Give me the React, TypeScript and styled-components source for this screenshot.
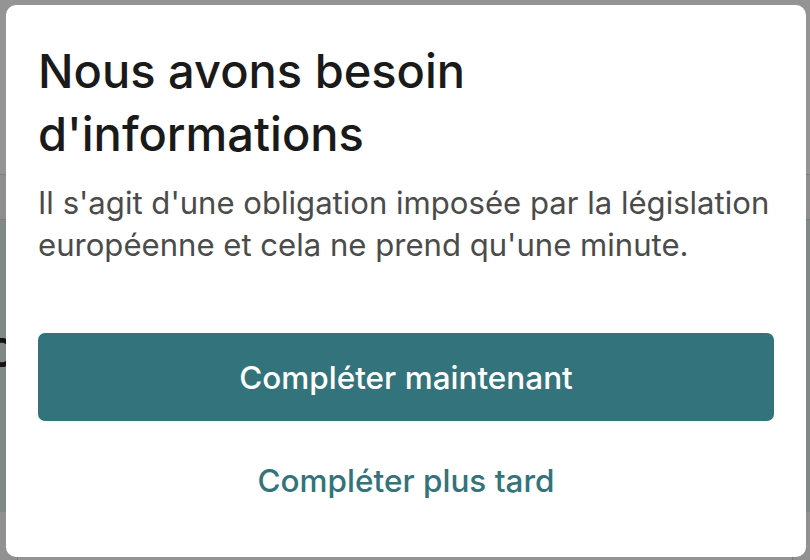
import React from "react";
import styled, { createGlobalStyle } from "styled-components";

const Global = createGlobalStyle`
  html, body { margin: 0; padding: 0; }
  body { font-family: Inter, "Noto Sans", sans-serif; background: #fff; }
  * { box-sizing: border-box; }
`;

const Page = styled.div`
  width: 810px;
  height: 560px;
  position: relative;
  overflow: hidden;
  display: flex;
  flex-direction: column;
`;

const Header = styled.header`
  height: 175px;
  background: #ffffff;
  border-bottom: 1px solid #dcdcdc;
`;

const Nav = styled.nav`
  height: 45px;
  background: #f4f4f4;
  border-bottom: 1px solid #d6d6d6;
`;

const Hero = styled.section`
  height: 292px;
  background: #dfeaea;
  display: flex;
  flex-direction: column;
  justify-content: center;
  gap: 18px;
  overflow: hidden;
  padding-top: 20px;
`;

const HeroRow = styled.div<{ $size: number; $weight: number }>`
  display: flex;
  justify-content: space-between;
  margin: 0 -14px;
  font-size: ${(p) => p.$size}px;
  font-weight: ${(p) => p.$weight};
  color: #222;
`;

const Footer = styled.footer`
  flex: 1;
  background: #fafafa;
  display: flex;
  padding: 0 17px;
`;

const FooterCard = styled.div`
  flex: 1;
  border-left: 1px solid #cfcfcf;
  border-right: 1px solid #cfcfcf;
  background: #ffffff;
`;

const Overlay = styled.div`
  position: absolute;
  inset: 0;
  background: rgba(0, 0, 0, 0.42);
  display: flex;
  align-items: center;
  justify-content: center;
  padding: 5px 4px 3px 6px;
`;

const Modal = styled.div`
  width: 800px;
  height: 552px;
  background: #ffffff;
  border-radius: 10px;
  padding: 34px 32px 32px;
  display: flex;
  flex-direction: column;
`;

const Title = styled.h1`
  margin: 0;
  max-width: 600px;
  font-size: 47px;
  line-height: 63px;
  font-weight: 500;
  color: #1a1a1a;
`;

const Body = styled.p`
  margin: 17px 0 0;
  font-size: 31.1px;
  line-height: 42px;
  color: #4b4b4b;
`;

const Primary = styled.button`
  margin-top: 67px;
  height: 88px;
  width: 100%;
  flex-shrink: 0;
  border: none;
  border-radius: 7px;
  background: #33737c;
  color: #ffffff;
  font-family: inherit;
  font-size: 31.5px;
  font-weight: 500;
  cursor: pointer;
`;

const Secondary = styled.button`
  margin-top: 22px;
  height: 74px;
  width: 100%;
  flex-shrink: 0;
  border: none;
  background: transparent;
  color: #33737c;
  font-family: inherit;
  font-size: 31.5px;
  font-weight: 500;
  cursor: pointer;
`;

export default function App() {
  return (
    <>
      <Global />
      <Page>
        <Header />
        <Nav />
        <Hero>
          <HeroRow $size={40} $weight={600}>
            <span>O</span>
            <span> </span>
          </HeroRow>
          <HeroRow $size={24} $weight={400}>
            <span>u</span>
            <span>e</span>
          </HeroRow>
        </Hero>
        <Footer>
          <FooterCard />
        </Footer>
        <Overlay>
          <Modal role="dialog" aria-modal="true">
            <Title>Nous avons besoin d'informations</Title>
            <Body>
              Il s'agit d'une obligation imposée par la législation européenne et cela ne prend qu'une minute.
            </Body>
            <Primary>Compléter maintenant</Primary>
            <Secondary>Compléter plus tard</Secondary>
          </Modal>
        </Overlay>
      </Page>
    </>
  );
}
